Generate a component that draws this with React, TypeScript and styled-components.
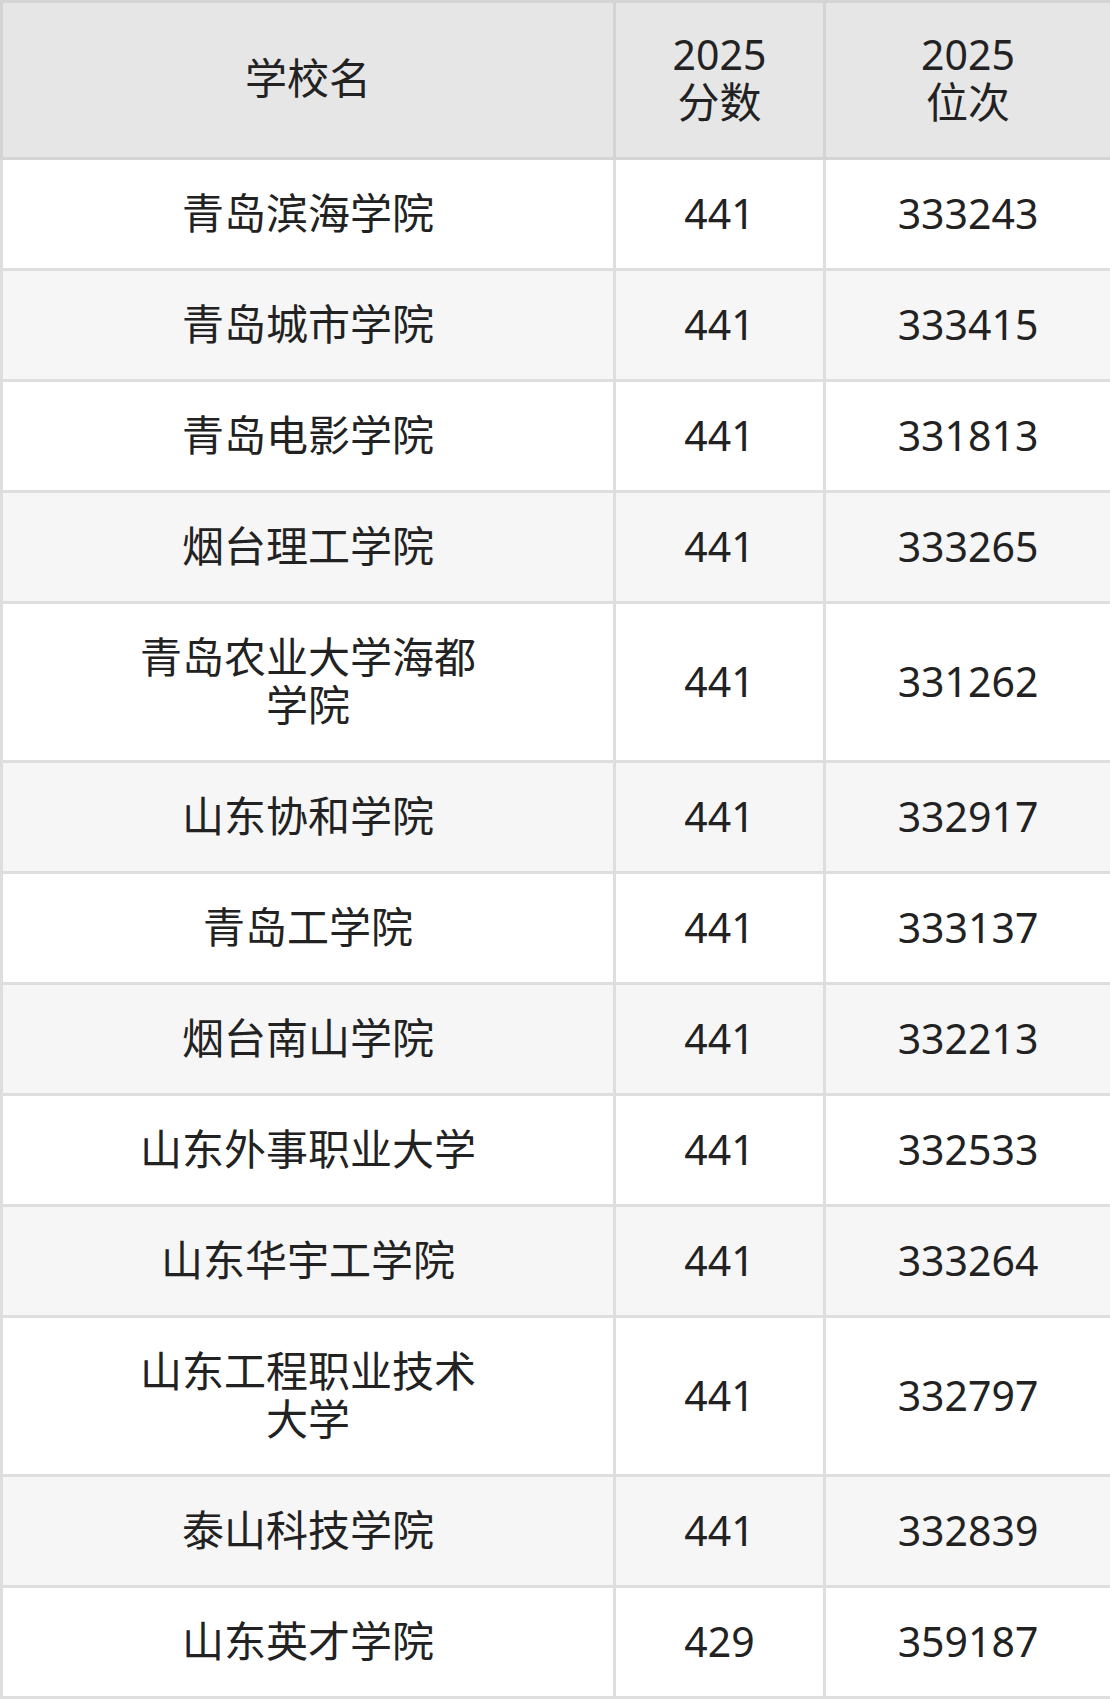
import styled, {createGlobalStyle} from "styled-components";

const GlobalStyle = createGlobalStyle`
  html, body {
    margin: 0;
    padding: 0;
    background: #ffffff;
  }
  body {
    font-family: "Noto Sans", "Noto Sans CJK SC", sans-serif;
    color: #222222;
  }
`

const Table = styled.table`
  width: 1110px;
  border-collapse: collapse;
  table-layout: fixed;
  border: 3px solid #d2d2d2;
  font-size: 41px;
  line-height: 48px;
  text-align: center;
`

const HeadCell = styled.th`
  background-color: #e6e6e6;
  border: 3px solid #d4d4d4;
  padding: 27px 10px 31px;
  font-weight: normal;
  vertical-align: middle;
`

const HeadLabel = styled.span`
  font-size: 42px;
`

const Row = styled.tr<{ $striped: boolean }>`
  background-color: ${({$striped}) => ($striped ? "#f6f6f6" : "#ffffff")};
`

const Cell = styled.td<{ $name?: boolean }>`
  border: 3px solid #dedede;
  padding: ${({$name}) => ($name ? "29px 128px 31px" : "29px 10px 31px")};
  font-size: ${({$name}) => ($name ? "42px" : "41px")};
  vertical-align: middle;
`

interface School {
    name: string;
    score: number;
    rank: number;
}

const schools: School[] = [
    {name: "青岛滨海学院", score: 441, rank: 333243},
    {name: "青岛城市学院", score: 441, rank: 333415},
    {name: "青岛电影学院", score: 441, rank: 331813},
    {name: "烟台理工学院", score: 441, rank: 333265},
    {name: "青岛农业大学海都学院", score: 441, rank: 331262},
    {name: "山东协和学院", score: 441, rank: 332917},
    {name: "青岛工学院", score: 441, rank: 333137},
    {name: "烟台南山学院", score: 441, rank: 332213},
    {name: "山东外事职业大学", score: 441, rank: 332533},
    {name: "山东华宇工学院", score: 441, rank: 333264},
    {name: "山东工程职业技术大学", score: 441, rank: 332797},
    {name: "泰山科技学院", score: 441, rank: 332839},
    {name: "山东英才学院", score: 429, rank: 359187},
]

export default function App() {
    return (
        <>
            <GlobalStyle/>
            <Table>
                <colgroup>
                    <col style={{width: 613}}/>
                    <col style={{width: 210}}/>
                    <col style={{width: 287}}/>
                </colgroup>
                <thead>
                <tr>
                    <HeadCell><HeadLabel>学校名</HeadLabel></HeadCell>
                    <HeadCell>2025<br/><HeadLabel>分数</HeadLabel></HeadCell>
                    <HeadCell>2025<br/><HeadLabel>位次</HeadLabel></HeadCell>
                </tr>
                </thead>
                <tbody>
                {schools.map((s, i) => (
                    <Row key={s.name} $striped={i % 2 === 1}>
                        <Cell $name>{s.name}</Cell>
                        <Cell>{s.score}</Cell>
                        <Cell>{s.rank}</Cell>
                    </Row>
                ))}
                </tbody>
            </Table>
        </>
    )
}
